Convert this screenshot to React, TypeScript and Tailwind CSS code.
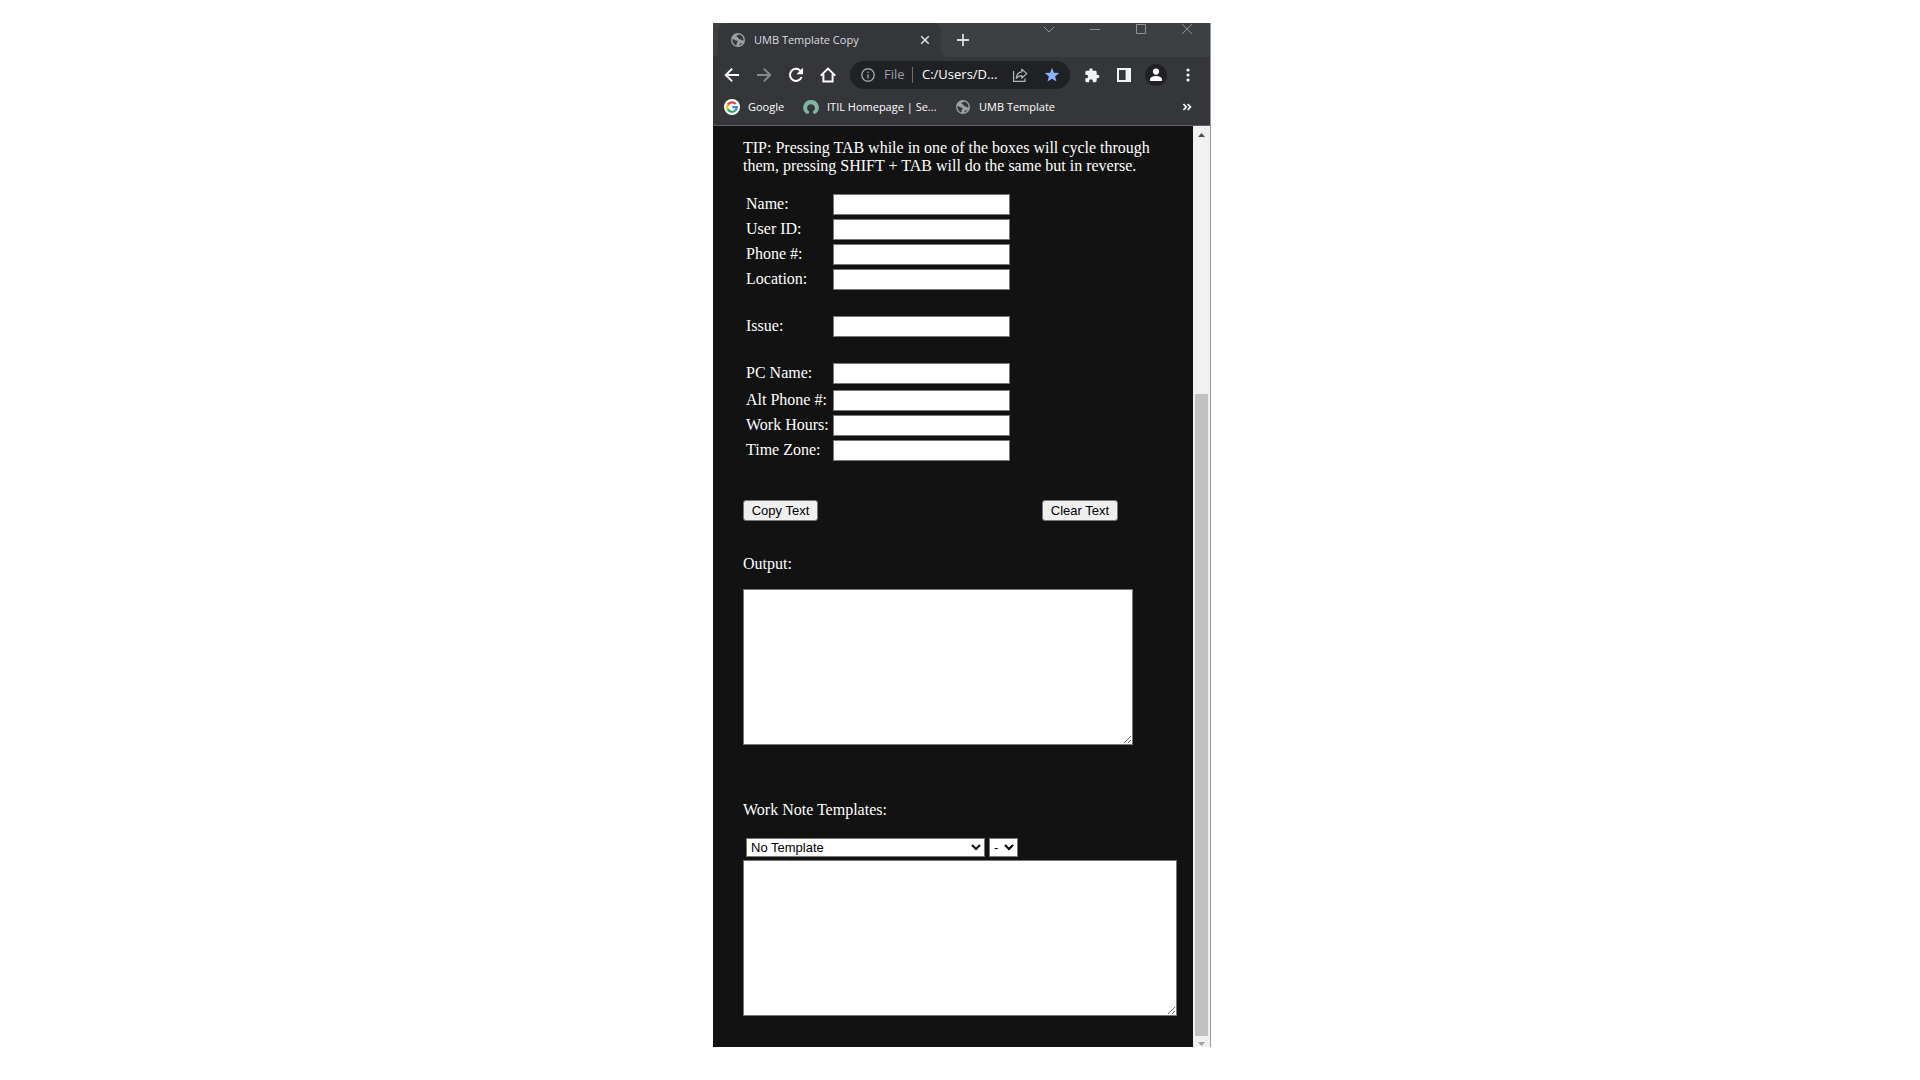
import type { ReactNode } from "react";

function Globe() {
  return (
    <svg viewBox="0 0 14 14" className="size-[14px] shrink-0" aria-hidden="true">
      <circle cx="7" cy="7" r="7" fill="#9aa0a6" />
      <path
        d="M1.4 6.2 C2.6 6.2 3.6 6.6 4.2 7.2 C4.8 7.8 6.2 7.3 6.6 8.1 C7 9 5.9 9.6 5.7 10.4 C5.6 11.2 5.6 12 5.2 12.4 C2.6 11.6 1.1 9 1.4 6.2 Z M8.2 1.5 C7 2.2 5.6 2.4 5.5 3.6 C5.5 4.7 6.9 4.4 7.5 5 C8.1 5.7 8.3 6.5 9.3 6.5 C10.2 6.4 10.6 7.2 11.4 7.5 C12 7.7 12.5 7.5 12.5 7 C12.5 4.2 10.7 1.9 8.2 1.5 Z M8.4 12.4 C8.2 11.2 9 10.2 10.2 10.2 L11.4 10.3 C10.7 11.4 9.7 12.1 8.4 12.4 Z"
        fill="#35363a"
      />
    </svg>
  );
}

function GoogleMark() {
  return (
    <svg viewBox="0 0 16 16" className="size-4 shrink-0" aria-hidden="true">
      <circle cx="8" cy="8" r="8" fill="#fff" />
      <g fill="none" strokeWidth="2.3">
        <path d="M11.6 4.9 A4.8 4.8 0 0 0 3.8 5.8" stroke="#ea4335" />
        <path d="M3.9 5.6 A4.8 4.8 0 0 0 3.9 10.4" stroke="#fbbc05" />
        <path d="M3.8 10.2 A4.8 4.8 0 0 0 11.3 11.5" stroke="#34a853" />
        <path d="M8.2 8.2 H12.8 A4.8 4.8 0 0 1 11.1 11.7" stroke="#4285f4" />
      </g>
    </svg>
  );
}

function IconButton({ label, className, children }: { label: string; className: string; children: ReactNode }) {
  return (
    <button type="button" aria-label={label} className={`flex shrink-0 items-center justify-center ${className}`}>
      {children}
    </button>
  );
}

function TabStrip() {
  return (
    <div className="flex h-[34px] bg-[#3c4043]">
      <div className="w-[5px] shrink-0 bg-[#35363a]">
        <div className="h-full rounded-br-lg bg-[#3c4043]" />
      </div>
      <div className="flex w-[223px] shrink-0 items-center rounded-t-lg bg-[#35363a] pl-[13px] pr-[8px] text-[#dadce0]">
        <Globe />
        <span className="ml-[9px] grow whitespace-nowrap text-[11px]">UMB Template Copy</span>
        <IconButton label="Close tab" className="size-4">
          <svg viewBox="0 0 16 16" className="size-4" fill="none" stroke="#dadce0" strokeWidth="1.6">
            <path d="M4.2 4.2 L11.8 11.8 M11.8 4.2 L4.2 11.8" />
          </svg>
        </IconButton>
      </div>
      <div className="w-2 shrink-0 bg-[#35363a]">
        <div className="h-full rounded-bl-lg bg-[#3c4043]" />
      </div>
      <IconButton label="New tab" className="ml-[6px] w-4">
        <svg viewBox="0 0 16 16" className="size-4" fill="none" stroke="#dadce0" strokeWidth="1.8">
          <path d="M8 2 V14 M2 8 H14" />
        </svg>
      </IconButton>
      <div className="ml-auto flex h-3 items-center gap-[30px] pr-[15px]">
        {[
          ["Search tabs", "M3 4 L8 9 L13 4"],
          ["Minimize", "M3 6.5 H13"],
          ["Maximize", "M3.5 1.5 H12.5 V10.5 H3.5 Z"],
          ["Close", "M3 1 L13 11 M13 1 L3 11"],
        ].map(([label, d]) => (
          <IconButton key={label} label={label} className="w-4">
            <svg viewBox="0 0 16 12" className="h-3 w-4" fill="none" stroke="#8f9294" strokeWidth="1">
              <path d={d} />
            </svg>
          </IconButton>
        ))}
      </div>
    </div>
  );
}

function Toolbar() {
  return (
    <div className="flex h-9 items-center bg-[#35363a] pl-[11px] pr-[14px]">
      <IconButton label="Back" className="size-4">
        <svg viewBox="0 0 16 16" className="size-4" fill="none" stroke="#fff" strokeWidth="2">
          <path d="M15 8 H2.2 M8.2 1.6 L1.8 8 L8.2 14.4" />
        </svg>
      </IconButton>
      <IconButton label="Forward" className="ml-4 size-4">
        <svg viewBox="0 0 16 16" className="size-4" fill="none" stroke="#86888a" strokeWidth="2">
          <path d="M1 8 H13.8 M7.8 1.6 L14.2 8 L7.8 14.4" />
        </svg>
      </IconButton>
      <IconButton label="Reload" className="ml-4 size-4">
        <svg viewBox="0 0 16 16" className="size-4" fill="none" stroke="#fff" strokeWidth="2">
          <path d="M13.6 10 A6 6 0 1 1 12.4 3.8" />
          <path d="M15 0.8 V7.3 H8.5 Z" fill="#fff" stroke="none" />
        </svg>
      </IconButton>
      <IconButton label="Home" className="ml-4 size-4">
        <svg viewBox="0 0 16 16" className="size-4" fill="none" stroke="#fff" strokeWidth="2">
          <path d="M0.8 8.6 L8 1.6 L15.2 8.6" />
          <path d="M3.4 7 V14.6 H12.6 V7" />
        </svg>
      </IconButton>
      <div className="ml-[14px] flex h-7 min-w-0 grow items-center rounded-full bg-[#202124] pl-[11px] pr-[10px]">
        <svg viewBox="0 0 14 14" className="size-[14px] shrink-0" fill="none" stroke="#9aa0a6" strokeWidth="1.4" aria-hidden="true">
          <circle cx="7" cy="7" r="6.2" />
          <path d="M7 6.2 V10.4 M7 3.6 V5" />
        </svg>
        <span className="ml-[9px] w-[21px] text-[13px] text-[#9aa0a6]">File</span>
        <span className="ml-[7px] h-4 w-px shrink-0 bg-[#6b6e72]" />
        <input
          aria-label="Address"
          defaultValue="C:/Users/D..."
          className="ml-[9px] w-0 min-w-0 grow bg-transparent text-[13px] text-white outline-none"
        />
        <IconButton label="Share" className="ml-2 size-4">
          <svg viewBox="0 0 16 16" className="size-4" fill="none" stroke="#b4b7ba" strokeWidth="1.2">
            <path d="M1.6 4 V14.4 H13 V11.6" />
            <path d="M9.8 2.2 L14.8 6.6 L9.8 11 V8.6 C7.4 8.6 5.6 9.4 4.2 11.4 C4.6 7.6 6.6 5.2 9.8 4.8 Z" strokeLinejoin="round" />
          </svg>
        </IconButton>
        <IconButton label="Bookmark this tab" className="ml-4 size-4">
          <svg viewBox="0 0 16 16" className="size-4" fill="#8ab4f8">
            <path d="M8 0.8 L9.9 5.7 L15.2 6 L11.1 9.4 L12.5 14.6 L8 11.7 L3.5 14.6 L4.9 9.4 L0.8 6 L6.1 5.7 Z" />
          </svg>
        </IconButton>
      </div>
      <IconButton label="Extensions" className="ml-[14px] size-4">
        <svg viewBox="0 0 24 24" className="size-[17px]" fill="#f1f3f4">
          <path d="M20.5 11H19V7c0-1.1-.9-2-2-2h-4V3.5C13 2.12 11.88 1 10.5 1S8 2.12 8 3.5V5H4c-1.1 0-1.99.9-1.99 2v3.8H3.5c1.49 0 2.7 1.21 2.7 2.7s-1.21 2.7-2.7 2.7H2V20c0 1.1.9 2 2 2h3.8v-1.5c0-1.49 1.21-2.7 2.7-2.7 1.49 0 2.7 1.21 2.7 2.7V22H17c1.1 0 2-.9 2-2v-4h1.5c1.38 0 2.5-1.12 2.5-2.5S21.88 11 20.5 11z" />
        </svg>
      </IconButton>
      <IconButton label="Side panel" className="ml-4 size-4">
        <svg viewBox="0 0 16 16" className="size-4" fill="#f1f3f4">
          <path d="M1 1 H15 V15 H1 Z M3 3 V13 H9.6 V3 Z" fillRule="evenodd" />
        </svg>
      </IconButton>
      <IconButton label="Profile" className="ml-[13px] size-[22px] rounded-full bg-[#202124]">
        <svg viewBox="0 0 14 14" className="size-[14px]" fill="#fff">
          <circle cx="7" cy="3.6" r="3.1" />
          <path d="M1 13 V11.4 C1 9.2 4.6 8.1 7 8.1 C9.4 8.1 13 9.2 13 11.4 V13 Z" />
        </svg>
      </IconButton>
      <IconButton label="Menu" className="ml-[13px] size-4">
        <svg viewBox="0 0 16 16" className="size-4" fill="#f1f3f4">
          <circle cx="8" cy="3" r="1.6" />
          <circle cx="8" cy="8" r="1.6" />
          <circle cx="8" cy="13" r="1.6" />
        </svg>
      </IconButton>
    </div>
  );
}

function Bookmarks() {
  return (
    <nav className="flex h-[33px] items-center whitespace-nowrap border-b border-[#5f6063] bg-[#35363a] pb-1 pl-[11px] pr-[15px] text-[11px] text-white">
      <a href="#google" className="flex w-[79px] shrink-0 items-center gap-2">
        <GoogleMark />
        Google
      </a>
      <a href="#itil" className="flex w-[153px] shrink-0 items-center gap-2">
        <svg viewBox="0 0 16 16" className="size-4 shrink-0" aria-hidden="true">
          <path
            d="M8 1 A7.6 7.6 0 0 0 2.8 14.3 C3.5 14.9 4.4 15 5.1 14.5 C6.9 13.4 9.1 13.4 10.9 14.5 C11.6 15 12.5 14.9 13.2 14.3 A7.6 7.6 0 0 0 8 1 Z M8 5.2 A3.8 3.8 0 0 1 10.6 11.8 C9.4 13.4 6.6 13.4 5.4 11.8 A3.8 3.8 0 0 1 8 5.2 Z"
            fill="#81b5a1"
            fillRule="evenodd"
          />
          <path d="M6 12 H10 V15 H6 Z" fill="#35363a" />
        </svg>
        ITIL Homepage | Se...
      </a>
      <a href="#umb" className="flex items-center gap-[9px]">
        <Globe />
        UMB Template
      </a>
      <IconButton label="More bookmarks" className="ml-auto size-4">
        <svg viewBox="0 0 16 16" className="size-4" fill="none" stroke="#f1f3f4" strokeWidth="1.8">
          <path d="M4.4 5 L7.2 8 L4.4 11 M8.6 5 L11.4 8 L8.6 11" />
        </svg>
      </IconButton>
    </nav>
  );
}

function Field({ id, label }: { id: string; label: string }) {
  return (
    <div className="flex h-[21px] items-start">
      <label htmlFor={id} className="w-[87px] shrink-0 whitespace-nowrap leading-5">
        {label}
      </label>
      <input id={id} type="text" className="h-full w-[177px] border border-[#767676] bg-white px-0.5 text-black" />
    </div>
  );
}

const buttonClass =
  "h-[21px] rounded-[3px] border border-[#767676] bg-[#efefef] text-center font-['Liberation_Sans',sans-serif] text-[13px] leading-4 text-black";
const selectClass =
  "h-[19px] border border-[#767676] bg-white font-['Liberation_Sans',sans-serif] text-[13px] leading-4 text-black";

function TemplateForm() {
  return (
    <main className="min-w-0 grow bg-[#121212] pb-[31px] pl-[30px] pr-4 pt-[13px] font-['Liberation_Serif',serif] text-base leading-[18px] text-white">
      <p className="max-w-[420px]">
        TIP: Pressing TAB while in one of the boxes will cycle through them, pressing SHIFT + TAB will do the same but
        in reverse.
      </p>
      <form className="mt-[19px]">
        <div className="flex flex-col gap-1 pl-[3px]">
          <Field id="name" label="Name:" />
          <Field id="user-id" label="User ID:" />
          <Field id="phone" label="Phone #:" />
          <Field id="location" label="Location:" />
        </div>
        <div className="my-[26px] pl-[3px]">
          <Field id="issue" label="Issue:" />
        </div>
        <div className="pl-[3px]">
          <Field id="pc-name" label="PC Name:" />
        </div>
        <div className="mt-[6px] flex flex-col gap-1 pl-[3px]">
          <Field id="alt-phone" label="Alt Phone #:" />
          <Field id="work-hours" label="Work Hours:" />
          <Field id="time-zone" label="Time Zone:" />
        </div>
        <div className="mt-[39px] flex max-w-[375px] justify-between">
          <button type="button" className={`w-[75px] ${buttonClass}`}>
            Copy Text
          </button>
          <button type="button" className={`w-[76px] ${buttonClass}`}>
            Clear Text
          </button>
        </div>
        <label htmlFor="output" className="mt-[34px] block">
          Output:
        </label>
        <textarea
          id="output"
          className="mt-4 block h-[156px] w-full max-w-[390px] resize border border-[#767676] bg-white p-0.5 text-black"
        />
        <label htmlFor="notes" className="mt-14 block">
          Work Note Templates:
        </label>
        <div className="mt-[19px] flex gap-1 pl-[3px]">
          <select aria-label="Template" className={`w-[239px] ${selectClass}`}>
            <option>No Template</option>
          </select>
          <select aria-label="Variant" className={`w-[29px] ${selectClass}`}>
            <option>-</option>
          </select>
        </div>
        <textarea
          id="notes"
          className="mt-[3px] block h-[156px] w-full max-w-[434px] resize border border-[#767676] bg-white p-0.5 text-black"
        />
      </form>
    </main>
  );
}

function ScrollBar() {
  return (
    <div className="flex w-[17px] shrink-0 flex-col items-center bg-[#f1f1f1]" aria-hidden="true">
      <svg viewBox="0 0 17 17" className="size-[17px] shrink-0" fill="#505050">
        <path d="M5 11 L8.5 7 L12 11 Z" />
      </svg>
      <div className="h-[251px] shrink-0" />
      <div className="w-[13px] grow bg-[#c1c1c1]" />
      <svg viewBox="0 0 17 11" className="h-[11px] w-[17px] shrink-0" fill="#a3a3a3">
        <path d="M5 6 L12 6 L8.5 10 Z" />
      </svg>
    </div>
  );
}

export default function App() {
  return (
    <div className="flex min-h-screen items-start justify-center bg-white pl-1 pt-[23px]">
      <div className="w-full max-w-[498px] border-r border-[#999] font-['Open_Sans','Noto_Sans',sans-serif]">
        <TabStrip />
        <Toolbar />
        <Bookmarks />
        <div className="flex">
          <TemplateForm />
          <ScrollBar />
        </div>
      </div>
    </div>
  );
}
